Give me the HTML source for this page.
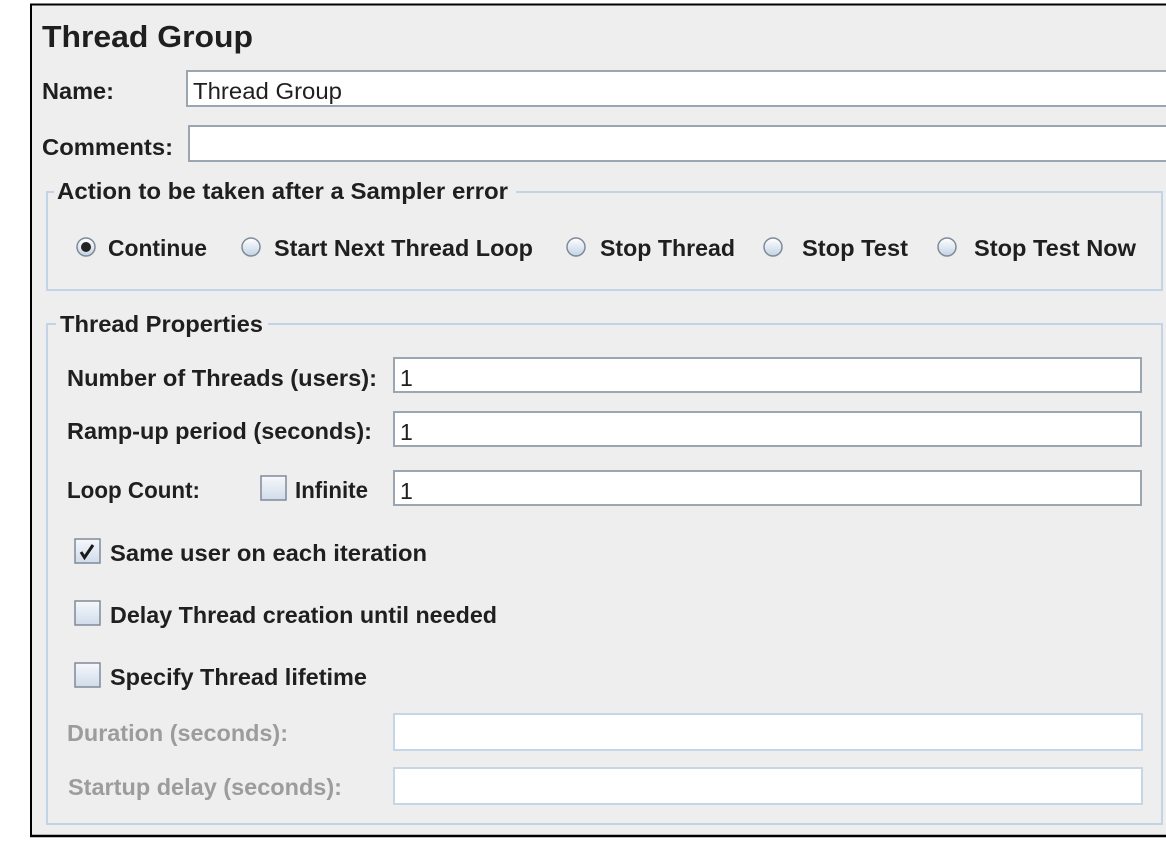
<!DOCTYPE html>
<html><head><meta charset="utf-8"><style>
html,body{margin:0;padding:0;background:#fff;width:1166px;height:848px;overflow:hidden}
svg{display:block}
text{font-family:"Liberation Sans",Arial,sans-serif;font-weight:bold;fill:#1f1f1f}
.lab{font-size:23px}
.dis{fill:#9c9c9c}
.reg{font-weight:normal}
</style></head><body>
<svg width="1166" height="848" viewBox="0 0 1166 848" xmlns="http://www.w3.org/2000/svg">
<defs>
<linearGradient id="rg" x1="0" y1="0" x2="0" y2="1"><stop offset="0" stop-color="#ffffff"/><stop offset="1" stop-color="#c2d2e4"/></linearGradient>
<linearGradient id="cg" x1="0" y1="0" x2="0" y2="1"><stop offset="0" stop-color="#f6f8fb"/><stop offset="1" stop-color="#d0dcea"/></linearGradient>
</defs>
<rect x="0" y="0" width="1166" height="848" fill="#fff"/>
<rect x="32" y="5" width="1140" height="831" fill="#eeeeee"/>
<line x1="31" y1="4" x2="31" y2="837" stroke="#000" stroke-width="2"/>
<line x1="30" y1="4.5" x2="1166" y2="4.5" stroke="#000" stroke-width="2"/>
<line x1="30" y1="836" x2="1166" y2="836" stroke="#000" stroke-width="2.5"/>

<text x="42" y="47" font-size="31" textLength="211" lengthAdjust="spacingAndGlyphs">Thread Group</text>

<text class="lab" x="42" y="99" textLength="72" lengthAdjust="spacingAndGlyphs">Name:</text>
<rect x="187" y="71" width="990" height="35" fill="#fff" stroke="#9aa6b2" stroke-width="2"/>
<text class="lab reg" x="193" y="99" textLength="149" lengthAdjust="spacingAndGlyphs">Thread Group</text>

<text class="lab" x="42" y="155" textLength="131" lengthAdjust="spacingAndGlyphs">Comments:</text>
<rect x="189" y="126" width="990" height="35" fill="#fff" stroke="#9aa6b2" stroke-width="2"/>

<path d="M54 192 H47 V290 H1162 V192 H516" fill="none" stroke="#c3d4e6" stroke-width="2"/>
<text class="lab" x="57" y="199" textLength="451" lengthAdjust="spacingAndGlyphs">Action to be taken after a Sampler error</text>

<g stroke="#7f8a98" stroke-width="1.5" fill="url(#rg)">
<circle cx="86" cy="247" r="9"/>
<circle cx="251" cy="247" r="9"/>
<circle cx="576" cy="247" r="9"/>
<circle cx="773" cy="247" r="9"/>
<circle cx="947" cy="247" r="9"/>
</g>
<circle cx="86" cy="247" r="5" fill="#222"/>
<text class="lab" x="108" y="256" textLength="99" lengthAdjust="spacingAndGlyphs">Continue</text>
<text class="lab" x="274" y="256" textLength="259" lengthAdjust="spacingAndGlyphs">Start Next Thread Loop</text>
<text class="lab" x="600" y="256" textLength="135" lengthAdjust="spacingAndGlyphs">Stop Thread</text>
<text class="lab" x="802" y="256" textLength="106" lengthAdjust="spacingAndGlyphs">Stop Test</text>
<text class="lab" x="974" y="256" textLength="162" lengthAdjust="spacingAndGlyphs">Stop Test Now</text>

<path d="M56 324 H47 V824 H1162 V324 H268" fill="none" stroke="#c3d4e6" stroke-width="2"/>
<text class="lab" x="60" y="332" textLength="203" lengthAdjust="spacingAndGlyphs">Thread Properties</text>

<text class="lab" x="67" y="386" textLength="310" lengthAdjust="spacingAndGlyphs">Number of Threads (users):</text>
<rect x="394" y="358" width="747" height="34" fill="#fff" stroke="#9aa6b2" stroke-width="2"/>
<text class="lab reg" x="400" y="386">1</text>

<text class="lab" x="67" y="439" textLength="305" lengthAdjust="spacingAndGlyphs">Ramp-up period (seconds):</text>
<rect x="394" y="412" width="747" height="34" fill="#fff" stroke="#9aa6b2" stroke-width="2"/>
<text class="lab reg" x="400" y="440">1</text>

<text class="lab" x="67" y="498" textLength="133" lengthAdjust="spacingAndGlyphs">Loop Count:</text>
<rect x="261" y="476" width="25" height="24" fill="url(#cg)" stroke="#7f8a98" stroke-width="1.5"/>
<text class="lab" x="295" y="498" textLength="73" lengthAdjust="spacingAndGlyphs">Infinite</text>
<rect x="394" y="471" width="747" height="34" fill="#fff" stroke="#9aa6b2" stroke-width="2"/>
<text class="lab reg" x="400" y="499">1</text>

<rect x="75" y="539" width="25" height="24" fill="url(#cg)" stroke="#7f8a98" stroke-width="1.5"/>
<path d="M81 552 L84.5 557.5 L93 545" fill="none" stroke="#1a1a1a" stroke-width="3"/>
<text class="lab" x="110" y="561" textLength="317" lengthAdjust="spacingAndGlyphs">Same user on each iteration</text>

<rect x="75" y="601" width="25" height="24" fill="url(#cg)" stroke="#7f8a98" stroke-width="1.5"/>
<text class="lab" x="110" y="623" textLength="387" lengthAdjust="spacingAndGlyphs">Delay Thread creation until needed</text>

<rect x="75" y="663" width="25" height="24" fill="url(#cg)" stroke="#7f8a98" stroke-width="1.5"/>
<text class="lab" x="110" y="685" textLength="257" lengthAdjust="spacingAndGlyphs">Specify Thread lifetime</text>

<text class="lab dis" x="67" y="741" textLength="221" lengthAdjust="spacingAndGlyphs">Duration (seconds):</text>
<rect x="394" y="714" width="748" height="36" fill="#fff" stroke="#c5d6e9" stroke-width="2"/>
<text class="lab dis" x="68" y="795" textLength="274" lengthAdjust="spacingAndGlyphs">Startup delay (seconds):</text>
<rect x="394" y="768" width="748" height="36" fill="#fff" stroke="#c5d6e9" stroke-width="2"/>
</svg>
</body></html>
